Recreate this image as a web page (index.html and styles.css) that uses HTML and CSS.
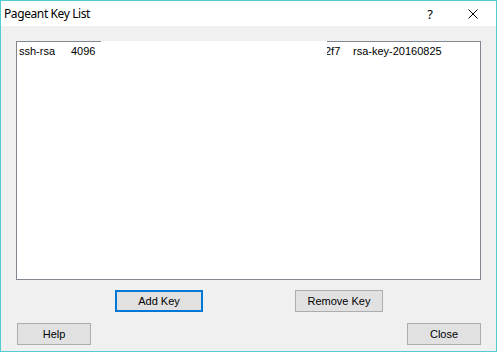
FILE: index.html
```html
<!DOCTYPE html>
<html lang="en">
<head>
    <meta charset="UTF-8">
    <title>Pageant Key List</title>
    <link rel="stylesheet" href="styles.css">
</head>
<body>
    <div class="window">
        <div class="titlebar">
            <span class="title">Pageant Key List</span>
            <span class="caption-help">?</span>
            <span class="caption-close">
                <svg width="10" height="10" viewBox="0 0 10 10">
                    <path d="M0.5 0.5 L9.5 9.5 M9.5 0.5 L0.5 9.5" stroke="#000" stroke-width="1" fill="none"/>
                </svg>
            </span>
        </div>
        <div class="content">
            <div class="keylist">
                <div class="key-row">
                    <span class="col-type">ssh-rsa</span>
                    <span class="col-bits">4096</span>
                    <span class="col-fp">2f7</span>
                    <span class="col-comment">rsa-key-20160825</span>
                </div>
                <!-- fingerprint blanked out -->
                <div class="cover"></div>
            </div>
            <div class="row-keys">
                <button class="btn btn-default">Add Key</button>
                <button class="btn">Remove Key</button>
            </div>
            <div class="row-bottom">
                <button class="btn btn-small">Help</button>
                <button class="btn btn-small">Close</button>
            </div>
        </div>
    </div>
</body>
</html>
```

FILE: styles.css
```css
body {
    margin: 0;
    background: #f0f0f0;
}

.window {
    width: 497px;
    height: 352px;
    box-sizing: border-box;
    border: 1px solid #4fcdcf;
    background: #f0f0f0;
    display: flex;
    flex-direction: column;
}

.titlebar {
    height: 25px;
    background: #ffffff;
    display: flex;
    align-items: center;
    font-family: "Noto Sans", sans-serif;
    font-size: 12px;
    color: #000;
}

.title {
    flex: 1;
    padding-left: 3px;
    letter-spacing: -0.4px;
}

.caption-help {
    width: 40px;
    text-align: center;
    font-size: 13px;
}

.caption-close {
    width: 46px;
    display: flex;
    justify-content: center;
    align-items: center;
}

.caption-close svg {
    display: block;
}

.content {
    flex: 1;
    padding: 15px 15px 0 15px;
    font-family: "Liberation Sans", Arial, sans-serif;
    font-size: 11px;
}

.keylist {
    position: relative;
    height: 239px;
    box-sizing: border-box;
    border: 1px solid #828790;
    background: #ffffff;
    padding: 3px 2px;
}

.key-row {
    display: flex;
    line-height: 13px;
    white-space: nowrap;
}

.col-type {
    width: 52px;
}

.col-bits {
    width: 254px;
}

.col-fp {
    width: 28px;
}

.cover {
    position: absolute;
    left: 84px;
    top: -1px;
    width: 226px;
    height: 16px;
    background: #ffffff;
}

.btn {
    width: 88px;
    height: 22px;
    box-sizing: border-box;
    border: 1px solid #adadad;
    background: #e1e1e1;
    font-family: "Liberation Sans", Arial, sans-serif;
    font-size: 11px;
    color: #000;
    padding: 0;
}

.btn-default {
    border: 2px solid #0078d7;
}

.btn-small {
    width: 74px;
}

.row-keys {
    display: flex;
    gap: 92px;
    margin-top: 10px;
    padding-left: 99px;
}

.row-bottom {
    display: flex;
    justify-content: space-between;
    margin-top: 11px;
    padding-left: 1px;
}
```
